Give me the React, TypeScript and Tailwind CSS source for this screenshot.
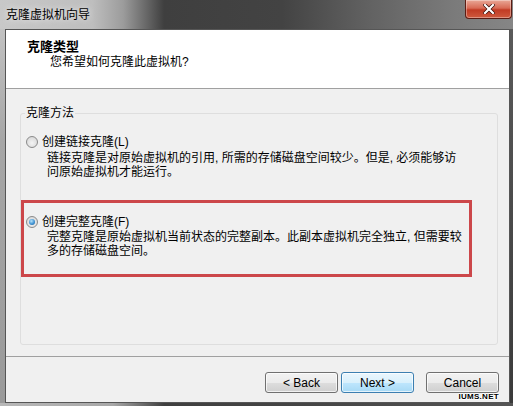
function Radio({ checked }: { checked?: boolean }) {
  return (
    <span className="w-[12px] h-[12px] rounded-full border border-[#8a8a8a] bg-[radial-gradient(circle_at_50%_60%,#f4f4f4_0%,#dcdcdc_70%,#cfcfcf_100%)] flex items-center justify-center shrink-0">
      {checked && (
        <span className="w-[6px] h-[6px] rounded-full bg-[radial-gradient(circle_at_40%_35%,#b7e2fa_0%,#3f93d3_55%,#1b5a92_100%)]" />
      )}
    </span>
  );
}

function WinButton({ label, primary }: { label: string; primary?: boolean }) {
  return (
    <div
      className={
        primary
          ? "w-[73px] h-[21px] rounded-[3px] border border-[#3c7fb1] bg-[linear-gradient(180deg,#eaf6fd_0%,#d9f0fc_50%,#bee6fd_52%,#a7d9f5_100%)] shadow-[inset_0_0_0_1px_rgba(255,255,255,0.7)] flex items-center justify-center leading-[16px]"
          : "w-[73px] h-[21px] rounded-[3px] border border-[#707070] bg-[linear-gradient(180deg,#f2f2f2_0%,#ebebeb_50%,#dddddd_52%,#cfcfcf_100%)] shadow-[inset_0_0_0_1px_rgba(255,255,255,0.7)] flex items-center justify-center leading-[16px]"
      }
    >
      {label}
    </div>
  );
}

export default function App() {
  return (
    <div className="w-[513px] h-[406px] flex flex-col overflow-hidden text-[12px] text-black font-['Liberation_Sans','Noto_Sans_CJK_SC',sans-serif]">
      {/* Title bar */}
      <div className="h-[29px] flex items-start justify-between bg-[linear-gradient(90deg,#c8c8c8_0%,#bebebe_18%,#9c9c9c_24%,#3f3f3f_32%,#434343_55%,#626262_72%,#7a7a7a_88%,#868686_100%)]">
        <span className="mt-[7px] ml-[6px] leading-[16px] [text-shadow:0_0_6px_rgba(255,255,255,0.9)]">
          克隆虚拟机向导
        </span>
        <div className="mr-[1px] w-[47px] h-[19px] rounded-b-[4px] border border-t-0 border-[#5b1d14] bg-[linear-gradient(180deg,#e9a897_0%,#d86a55_45%,#c13b24_55%,#cf5a3e_100%)] shadow-[inset_0_0_0_1px_rgba(255,255,255,0.35)] flex items-center justify-center">
          <svg width="12" height="10" viewBox="0 0 12 10">
            <path
              d="M2 1 L10 9 M10 1 L2 9"
              stroke="#3a0c06"
              strokeWidth="3.6"
              strokeLinecap="square"
            />
            <path
              d="M2 1 L10 9 M10 1 L2 9"
              stroke="#ffffff"
              strokeWidth="2.2"
              strokeLinecap="square"
            />
          </svg>
        </div>
      </div>

      <div className="flex-1 flex">
        <div className="w-[5px] bg-[linear-gradient(180deg,#c2c2c2_0%,#a6a6a6_30%,#9a9a9a_100%)]" />

        {/* Dialog client area */}
        <div className="flex-1 flex flex-col border border-[#565656] bg-[#f0f0f0]">
          {/* Header */}
          <div className="h-[59px] bg-white border-b border-[#a0a0a0] pt-[9px]">
            <div className="pl-[21px] font-bold text-[13px] leading-[16px]">克隆类型</div>
            <div className="pl-[44px] leading-[15px]">您希望如何克隆此虚拟机?</div>
          </div>

          {/* Body */}
          <div className="h-[267px]">
            <fieldset className="mt-[17px] ml-[14px] mr-[11px] h-[239px] border border-[#dedede] rounded-[3px]">
              <legend className="ml-[4px] px-[1px] leading-[14px]">克隆方法</legend>

              <div className="mt-[14px] pl-[5px]">
                <div className="flex items-center h-[16px] gap-[4px]">
                  <Radio />
                  <span className="leading-[16px]">创建链接克隆(L)</span>
                </div>
                <div className="mt-[1px] ml-[21px] leading-[14px] whitespace-nowrap">
                  链接克隆是对原始虚拟机的引用, 所需的存储磁盘空间较少。但是, 必须能够访
                  <br />
                  问原始虚拟机才能运行。
                </div>
              </div>

              <div className="mt-[21px] w-[451px] border-[3px] border-[#cc474a] pt-[11px] pb-[16px] pl-[2px]">
                <div className="flex items-center h-[16px] gap-[4px]">
                  <Radio checked />
                  <span className="leading-[16px]">创建完整克隆(F)</span>
                </div>
                <div className="ml-[21px] leading-[14px] whitespace-nowrap">
                  完整克隆是原始虚拟机当前状态的完整副本。此副本虚拟机完全独立, 但需要较
                  <br />
                  多的存储磁盘空间。
                </div>
              </div>
            </fieldset>
          </div>

          {/* Footer */}
          <div className="relative flex-1 border-t border-[#a0a0a0] pt-[15px] pr-[10px] flex justify-end items-start">
            <WinButton label="< Back" />
            <div className="ml-[3px]">
              <WinButton label="Next >" primary />
            </div>
            <div className="ml-[12px]">
              <WinButton label="Cancel" />
            </div>
            <span className="absolute right-[10px] bottom-[1px] text-[8px] leading-[8px] font-bold tracking-[0.3px] text-black [text-shadow:1px_0_0_#fff,-1px_0_0_#fff,0_1px_0_#fff,0_-1px_0_#fff]">
              IUMS.NET
            </span>
          </div>
        </div>

        <div className="w-[3px] bg-[linear-gradient(180deg,#5a5a5a_0%,#3a3a3a_100%)]" />
      </div>

      <div className="h-[3px] bg-[linear-gradient(90deg,#b8b8b8_0%,#a8a8a8_22%,#3f3f3f_32%,#454545_60%,#555555_100%)]" />
    </div>
  );
}
